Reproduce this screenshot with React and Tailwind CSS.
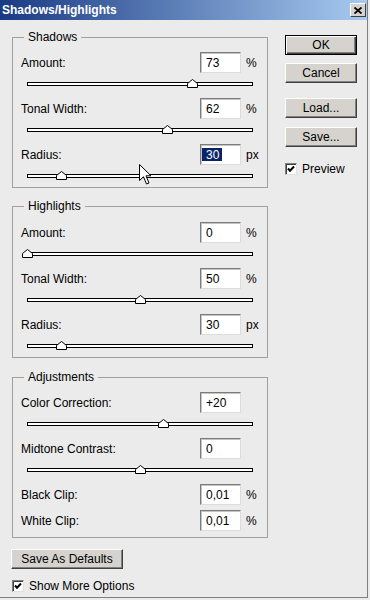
import React from 'react'

const font = "font-['Liberation_Sans',Arial,sans-serif]"

function Field({ value, selected }) {
  return (
    <div className={`w-[41px] h-[21px] bg-white border border-t-[#7c7c7c] border-l-[#7c7c7c] border-b-[#dcdcdc] border-r-[#dcdcdc] shadow-[inset_1px_1px_0_#c4c4c4] flex items-center leading-none ${selected ? 'pl-[1px]' : 'pl-[5px]'}`}>
      {selected ? (
        <span className="bg-[#0a246a] text-white px-[4px] pr-[3px] h-[13px] flex items-center">{value}</span>
      ) : (
        value
      )}
    </div>
  )
}

function Row({ label, value, unit, selected }) {
  return (
    <div className="flex items-center h-[21px]">
      <span className="flex-1 pl-[8px]">{label}</span>
      <Field value={value} selected={selected} />
      <span className="w-[26px] pl-[5px]">{unit}</span>
    </div>
  )
}

function Slider({ frac, last }) {
  return (
    <div className={`${last ? 'h-[22px]' : 'h-[25px]'} pt-[9px] pl-[14px]`}>
      <div className="relative w-[226px] h-[4px] border border-black bg-white">
        <svg
          className="absolute top-[-4px]"
          style={{ left: Math.round(frac * 226 - 6) }}
          width="11"
          height="9"
          viewBox="0 0 11 9"
        >
          <polygon points="0.5,4.5 5.5,0.5 10.5,4.5 10.5,8.5 0.5,8.5" fill="#fff" stroke="#000" />
        </svg>
      </div>
    </div>
  )
}

function Group({ title, className, children }) {
  return (
    <fieldset className={`w-[256px] border border-[#a0a0a0] ${className}`}>
      <legend className="ml-[11px] px-[4px] leading-[14px]">{title}</legend>
      {children}
    </fieldset>
  )
}

function Button({ children, primary, className }) {
  const bevel = primary
    ? 'border border-black shadow-[inset_1px_1px_0_#fff,inset_-1px_-1px_0_#404040,inset_-2px_-2px_0_#808080]'
    : 'border border-t-white border-l-white border-r-[#404040] border-b-[#404040] shadow-[inset_-1px_-1px_0_#808080]'
  return (
    <div className={`h-[20px] bg-[#d6d3ce] flex items-center justify-center ${bevel} ${className}`}>
      {children}
    </div>
  )
}

function Check({ label, className }) {
  return (
    <div className={`flex items-center ${className}`}>
      <div className="w-[12px] h-[12px] bg-white border border-t-[#808080] border-l-[#808080] border-b-[#e0e0e0] border-r-[#e0e0e0] shadow-[inset_1px_1px_0_#404040] flex items-center justify-center">
        <svg width="8" height="8" viewBox="0 0 8 8">
          <polyline points="1,3.5 3,5.8 7,1.5" fill="none" stroke="#000" strokeWidth="2" />
        </svg>
      </div>
      <span className="ml-[5px]">{label}</span>
    </div>
  )
}

export default function App() {
  return (
    <div className={`relative w-[370px] h-[600px] bg-[#ebebeb] text-[12px] text-black ${font}`}>
      <div className="w-[368px] h-[598px] border-r border-b border-[#808080]">
        <div className="h-[20px] flex items-center pl-[2px] bg-[linear-gradient(to_right,#1a3a84,#a6caf0)]">
          <span className="text-white font-bold text-[12px]">Shadows/Highlights</span>
          <div className="ml-auto mr-[1px] w-[16px] h-[14px] bg-[#d6d3ce] border border-t-white border-l-white border-r-[#404040] border-b-[#404040] flex items-center justify-center">
            <svg width="8" height="7" viewBox="0 0 8 7">
              <path d="M0.5 0.5 L7.5 6.5 M7.5 0.5 L0.5 6.5" stroke="#000" strokeWidth="1.8" />
            </svg>
          </div>
        </div>

        <div className="flex pt-[10px] pl-[12px]">
          <div className="flex flex-col">
            <Group title="Shadows" className="pt-[8px]">
              <Row label="Amount:" value="73" unit="%" />
              <Slider frac={0.73} />
              <Row label="Tonal Width:" value="62" unit="%" />
              <Slider frac={0.62} />
              <Row label="Radius:" value="30" unit="px" selected />
              <Slider frac={0.15} last />
            </Group>

            <Group title="Highlights" className="mt-[11px] pt-[9px]">
              <Row label="Amount:" value="0" unit="%" />
              <Slider frac={0} />
              <Row label="Tonal Width:" value="50" unit="%" />
              <Slider frac={0.5} />
              <Row label="Radius:" value="30" unit="px" />
              <Slider frac={0.15} last />
            </Group>

            <Group title="Adjustments" className="mt-[12px] pt-[8px] pb-[6px]">
              <Row label="Color Correction:" value="+20" />
              <Slider frac={0.6} />
              <Row label="Midtone Contrast:" value="0" />
              <Slider frac={0.5} />
              <Row label="Black Clip:" value="0,01" unit="%" />
              <div className="mt-[5px]">
                <Row label="White Clip:" value="0,01" unit="%" />
              </div>
            </Group>

            <Button className="mt-[11px] w-[112px] -ml-px">Save As Defaults</Button>
            <Check label="Show More Options" className="mt-[8px]" />
          </div>

          <div className="flex flex-col ml-[17px] mt-[5px] w-[72px]">
            <Button primary>OK</Button>
            <Button className="mt-[8px]">Cancel</Button>
            <Button className="mt-[15px]">Load...</Button>
            <Button className="mt-[9px]">Save...</Button>
            <Check label="Preview" className="mt-[13px]" />
          </div>
        </div>
      </div>

      <svg className="absolute left-[139px] top-[164px]" width="13" height="22" viewBox="0 0 13 22">
        <path d="M0.5 0.5 L0.5 16.5 L4.5 12.8 L7.5 20 L10 19 L7 11.8 L12 11.8 Z" fill="#fff" stroke="#000" />
      </svg>
    </div>
  )
}
